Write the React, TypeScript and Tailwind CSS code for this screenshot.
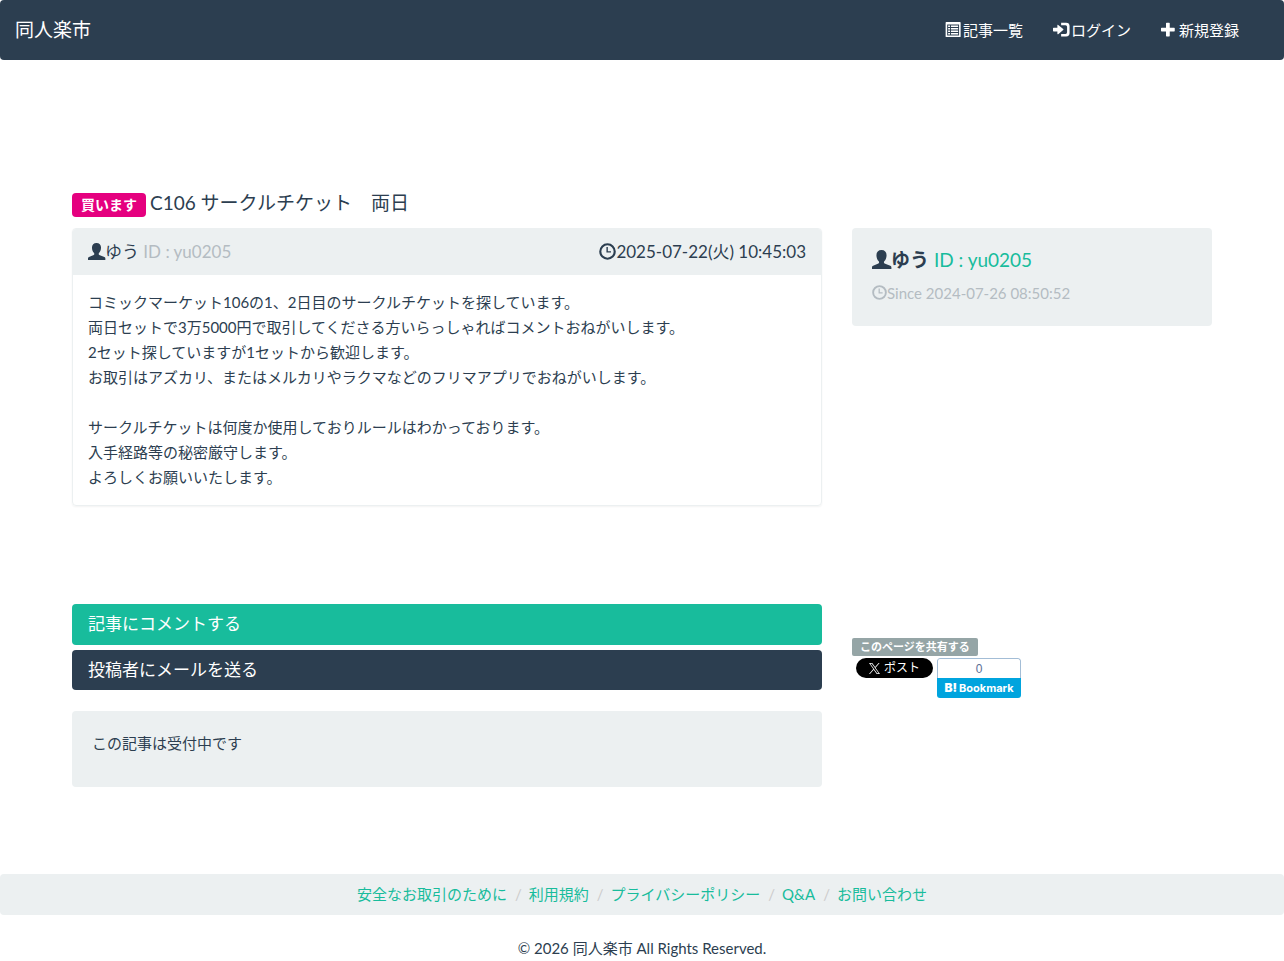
import type { ReactNode } from "react";
import clsx from "clsx";

type IconProps = { className?: string };

function Icon({ className, children }: IconProps & { children: ReactNode }) {
  return (
    <svg
      viewBox="0 0 24 24"
      fill="currentColor"
      aria-hidden="true"
      className={clsx("shrink-0 overflow-visible", className)}
    >
      {children}
    </svg>
  );
}

function UserIcon({ className }: IconProps) {
  return (
    <Icon className={className}>
      <path d="M12 0C8 0 5.600 2.500 5.600 6.500c0 3.200 1.200 6 2.900 7.700 0.600 0.700 0.700 2.200-0.400 2.800L1.400 19.800C0.500 20.200 0 20.800 0 21.700V24h24.500v-2.300c0-0.900-0.500-1.500-1.400-1.900l-7.200-2.800c-1.100-0.600-1-2.100-0.400-2.800 1.700-1.700 2.900-4.500 2.900-7.700C18.400 2.500 16 0 12 0z" />
    </Icon>
  );
}

function ClockIcon({ className }: IconProps) {
  return (
    <Icon className={className}>
      <circle cx="12" cy="12" r="10.200" fill="none" stroke="currentColor" strokeWidth="3" />
      <path d="M10.500 5.500h2v6h4.500v2h-6.500z" />
    </Icon>
  );
}

function ListIcon({ className }: IconProps) {
  return (
    <Icon className={className}>
      <path
        fillRule="evenodd"
        d="M2 0h22a1 1 0 0 1 1 1v22a1 1 0 0 1-1 1H2a1 1 0 0 1-1-1V1a1 1 0 0 1 1-1zM3.500 4v17.500h19V4z"
      />
      <path d="M5 5.500h3v2.500H5zM9.500 5.500h11.500v2.500H9.500zM5 9.500h3v2.500H5zM9.500 9.500h11.500v2.500H9.500zM5 13.500h3v2.500H5zM9.500 13.500h11.500v2.500H9.500zM5 17.500h3v2.500H5zM9.500 17.500h11.500v2.500H9.500z" />
    </Icon>
  );
}

function LoginIcon({ className }: IconProps) {
  return (
    <Icon className={className}>
      <path d="M1 9h6V5.200a0.800 0.800 0 0 1 1.300-0.600l8 6.600a1 1 0 0 1 0 1.600l-8 6.600A0.800 0.800 0 0 1 7 18.800V15H1a1 1 0 0 1-1-1v-4a1 1 0 0 1 1-1z" />
      <path d="M13 1h8a5.500 5.500 0 0 1 5.500 5.500v11A5.500 5.500 0 0 1 21 23h-8v-4h7a2.500 2.500 0 0 0 2.500-2.500v-9A2.500 2.500 0 0 0 20 5h-7z" />
    </Icon>
  );
}

function PlusIcon({ className }: IconProps) {
  return (
    <Icon className={className}>
      <path d="M9 1h4a1 1 0 0 1 1 1v7h7a1 1 0 0 1 1 1v4a1 1 0 0 1-1 1h-7v7a1 1 0 0 1-1 1H9a1 1 0 0 1-1-1v-7H1a1 1 0 0 1-1-1v-4a1 1 0 0 1 1-1h7V2a1 1 0 0 1 1-1z" />
    </Icon>
  );
}

function XLogo({ className }: IconProps) {
  return (
    <Icon className={className}>
      <path d="M14.258 10.152L23.176 0h-2.113l-7.747 8.813L7.133 0H0l9.352 13.328L0 23.973h2.113l8.176-9.309 6.531 9.309h7.133zm-2.895 3.293l-.949-1.328L2.875 1.560h3.246l6.086 8.523.945 1.328 7.910 11.078h-3.246z" />
    </Icon>
  );
}

const navLinks = [
  { label: "記事一覧", icon: ListIcon },
  { label: "ログイン", icon: LoginIcon },
  { label: "新規登録", icon: PlusIcon },
];

const footerLinks = [
  "安全なお取引のために",
  "利用規約",
  "プライバシーポリシー",
  "Q&A",
  "お問い合わせ",
];

const body = `コミックマーケット106の1、2日目のサークルチケットを探しています。
両日セットで3万5000円で取引してくださる方いらっしゃればコメントおねがいします。
2セット探していますが1セットから歓迎します。
お取引はアズカリ、またはメルカリやラクマなどのフリマアプリでおねがいします。

サークルチケットは何度か使用しておりルールはわかっております。
入手経路等の秘密厳守します。
よろしくお願いいたします。`;

function Header() {
  return (
    <header className="flex h-[60px] items-center justify-between rounded bg-[#2c3e50] pr-[45px] pl-[15px] text-white">
      <a href="#" className="text-[19px]">
        同人楽市
      </a>
      <nav className="flex gap-[30px]">
        {navLinks.map(({ label, icon: NavIcon }) => (
          <a key={label} href="#" className="flex items-center gap-[3px]">
            <NavIcon className="mb-0.5 size-[15px]" />
            {label}
          </a>
        ))}
      </nav>
    </header>
  );
}

function Article() {
  return (
    <article className="overflow-hidden rounded border border-[#ecf0f1] shadow-xs">
      <div className="flex items-center justify-between bg-[#ecf0f1] px-[15px] py-[10px] text-[17px] leading-[26px]">
        <div className="flex items-center">
          <UserIcon className="mb-0.5 size-[17px]" />
          <span>
            ゆう <span className="text-[#b4bcc2]">ID : yu0205</span>
          </span>
        </div>
        <div className="flex items-center">
          <ClockIcon className="mb-0.5 size-[17px]" />
          <time dateTime="2025-07-22T10:45:03">2025-07-22(火) 10:45:03</time>
        </div>
      </div>
      <p className="p-[15px] leading-[25px] whitespace-pre-line">{body}</p>
    </article>
  );
}

function Profile() {
  return (
    <aside className="rounded bg-[#ecf0f1] px-5 pt-5 pb-5">
      <div className="flex items-center text-[19px] leading-6">
        <UserIcon className="mb-0.5 size-[19px]" />
        <span>
          <strong>ゆう</strong>{" "}
          <a href="#" className="text-[#18bc9c]">
            ID : yu0205
          </a>
        </span>
      </div>
      <div className="mt-[9px] flex items-center leading-[25px] text-[#b4bcc2]">
        <ClockIcon className="mb-0.5 size-[15px]" />
        Since 2024-07-26 08:50:52
      </div>
    </aside>
  );
}

function Share() {
  return (
    <section className="pt-[34px]">
      <h2 className="w-fit rounded-xs bg-[#95a5a6] px-2 text-[11px] leading-[18px] font-bold text-white">
        このページを共有する
      </h2>
      <div className="mt-0.5 flex items-start gap-1 pl-1">
        <button
          type="button"
          className="flex h-5 w-[77px] items-center justify-center gap-1 rounded-full bg-black text-xs text-white"
        >
          <XLogo className="size-[11px]" />
          ポスト
        </button>
        <a
          href="#"
          className="w-[84px] overflow-hidden rounded-[3px] text-center font-['Liberation_Sans',sans-serif]"
        >
          <span className="block h-5 rounded-t-[3px] border border-b-0 border-[#a3bdd6] text-[12px] leading-[21px] text-[#5a6e96]">
            0
          </span>
          <span className="flex h-5 items-center justify-center gap-0.5 bg-[#00a4de] font-[Inter,sans-serif] text-[11px] font-bold text-white">
            <span className="text-[12px] font-black">B!</span>
            Bookmark
          </span>
        </a>
      </div>
    </section>
  );
}

export default function App() {
  return (
    <div className="bg-white font-[Lato,'Noto_Sans_CJK_JP',sans-serif] text-[15px] leading-[22px] text-[#2c3e50]" lang="ja">
      <Header />
      <main className="mx-auto max-w-[1170px] px-[15px] pt-[129px]">
        <h1 className="mb-[11px] flex items-end gap-1 text-[19px] leading-7">
          <span className="rounded bg-[#e5007f] px-[9px] text-[14px] leading-6 font-bold text-white">
            買います
          </span>
          <span className="self-start">C106 サークルチケット　両日</span>
        </h1>
        <div className="grid items-start gap-[30px] md:grid-cols-[25fr_12fr]">
          <Article />
          <Profile />
        </div>
        <div className="mt-[98px] grid items-start gap-[30px] md:grid-cols-[25fr_12fr]">
          <div>
            <div className="flex flex-col gap-[5px] text-[17px] leading-10 text-white">
              <button type="button" className="rounded bg-[#18bc9c] px-4 pb-px text-left">
                記事にコメントする
              </button>
              <button type="button" className="rounded bg-[#2c3e50] px-4 text-left">
                投稿者にメールを送る
              </button>
            </div>
            <div className="mt-[21px] rounded bg-[#ecf0f1] px-5 pt-5 pb-[31px] leading-[25px]">
              <p>この記事は受付中です</p>
            </div>
          </div>
          <Share />
        </div>
      </main>
      <footer className="mt-[87px]">
        <ul className="flex flex-wrap justify-center rounded bg-[#ecf0f1] leading-[41px]">
          {footerLinks.map((label, i) => (
            <li key={label}>
              {i > 0 && <span className="pr-[7px] pl-2 text-[#cccccc]">/</span>}
              <a href="#" className="text-[#18bc9c]">
                {label}
              </a>
            </li>
          ))}
        </ul>
        <p className="mt-[22px] text-center">© 2026 同人楽市 All Rights Reserved.</p>
      </footer>
    </div>
  );
}
